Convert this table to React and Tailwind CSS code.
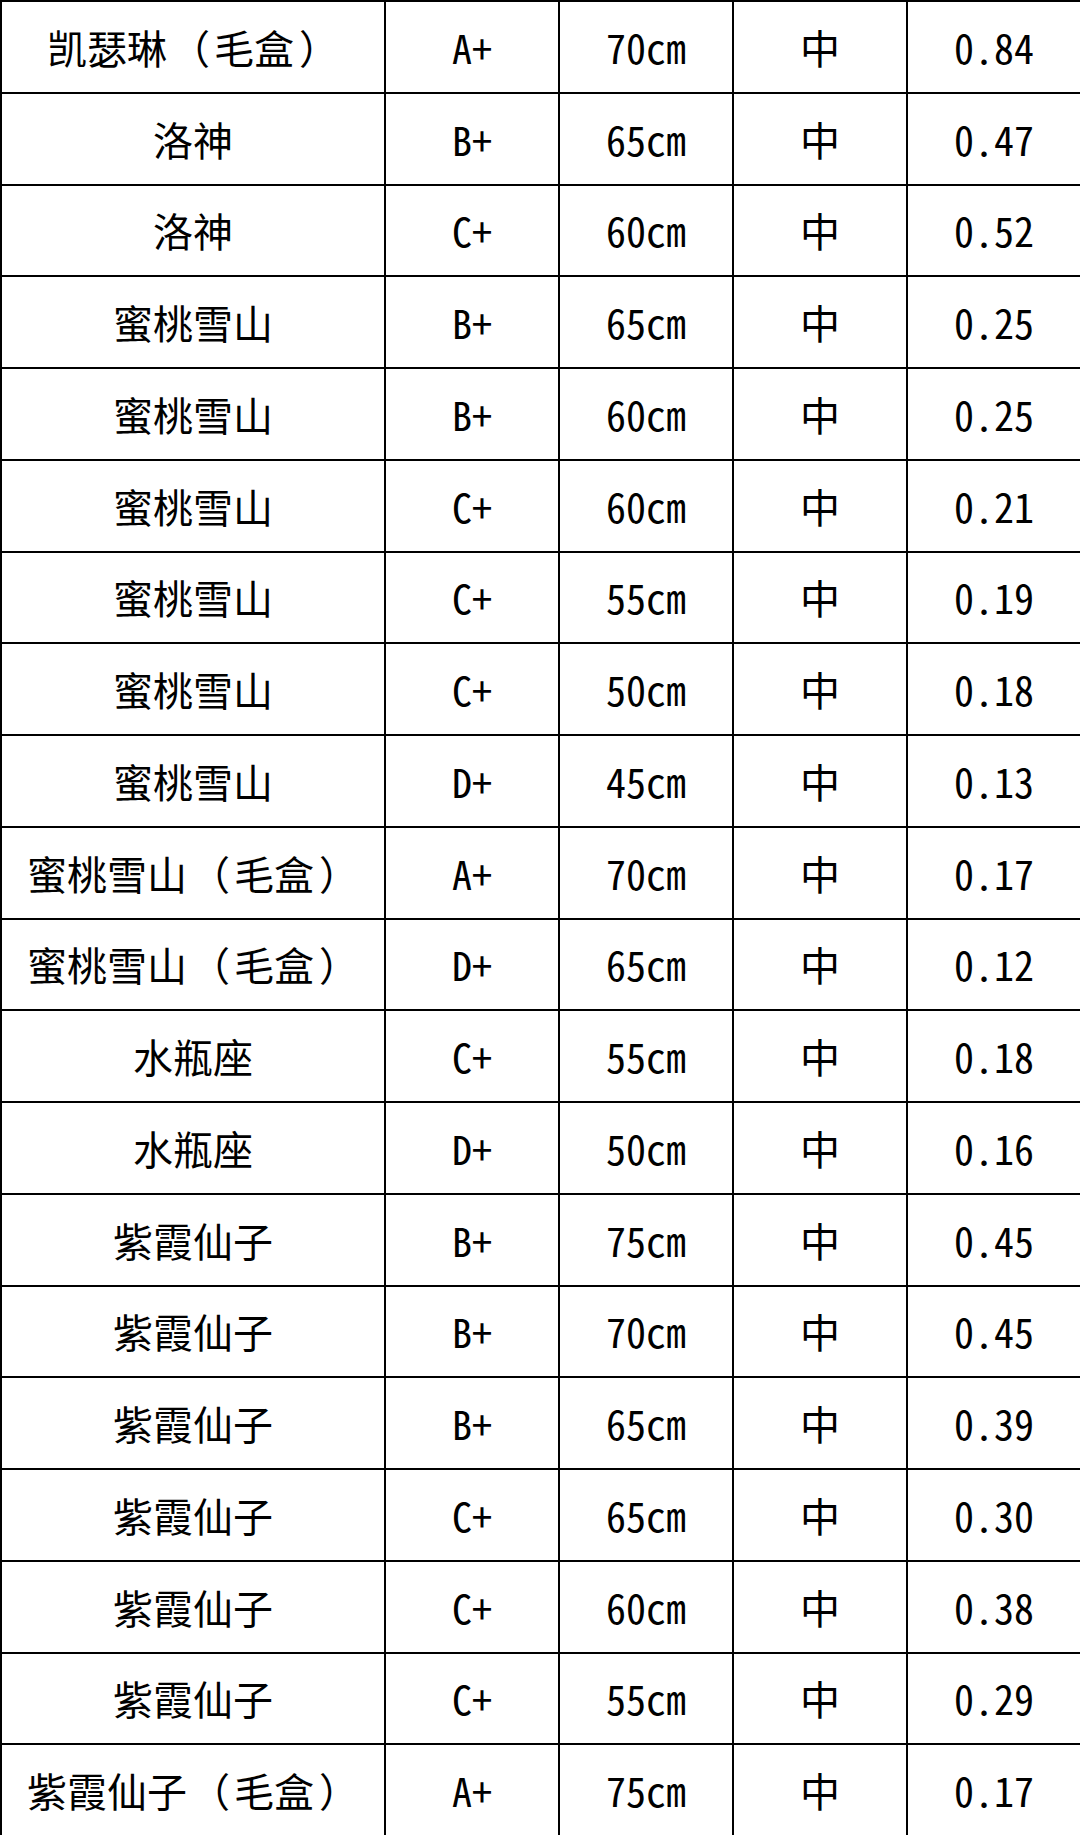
import React from "react";

const rows = [
  ["凯瑟琳（毛盒）", "A+", "70cm", "中", "0.84"],
  ["洛神", "B+", "65cm", "中", "0.47"],
  ["洛神", "C+", "60cm", "中", "0.52"],
  ["蜜桃雪山", "B+", "65cm", "中", "0.25"],
  ["蜜桃雪山", "B+", "60cm", "中", "0.25"],
  ["蜜桃雪山", "C+", "60cm", "中", "0.21"],
  ["蜜桃雪山", "C+", "55cm", "中", "0.19"],
  ["蜜桃雪山", "C+", "50cm", "中", "0.18"],
  ["蜜桃雪山", "D+", "45cm", "中", "0.13"],
  ["蜜桃雪山（毛盒）", "A+", "70cm", "中", "0.17"],
  ["蜜桃雪山（毛盒）", "D+", "65cm", "中", "0.12"],
  ["水瓶座", "C+", "55cm", "中", "0.18"],
  ["水瓶座", "D+", "50cm", "中", "0.16"],
  ["紫霞仙子", "B+", "75cm", "中", "0.45"],
  ["紫霞仙子", "B+", "70cm", "中", "0.45"],
  ["紫霞仙子", "B+", "65cm", "中", "0.39"],
  ["紫霞仙子", "C+", "65cm", "中", "0.30"],
  ["紫霞仙子", "C+", "60cm", "中", "0.38"],
  ["紫霞仙子", "C+", "55cm", "中", "0.29"],
  ["紫霞仙子（毛盒）", "A+", "75cm", "中", "0.17"],
];

// brackets sit a little wider in the original
const Name = ({ text }) => {
  const m = text.match(/^(.*)（(.*)）$/);
  if (!m) return text;
  return (
    <>
      {m[1]}
      <span className="pl-[3px] pr-[4px]">（</span>
      {m[2]}
      <span className="pl-[5px]">）</span>
    </>
  );
};

export default function App() {
  return (
    <div className="w-[1080px] h-[1835px] bg-white">
      <table className="w-[1080px] h-[1835px] table-fixed border-collapse text-black text-[40px] leading-none font-['Noto_Sans_Mono_CJK_SC','Noto_Sans_CJK_SC',sans-serif]">
        <colgroup>
          <col className="w-[384px]" />
          <col className="w-[174px]" />
          <col className="w-[174px]" />
          <col className="w-[174px]" />
          <col className="w-[174px]" />
        </colgroup>
        <tbody>
          {rows.map((r, i) => (
            <tr key={i} className="h-[91.75px]">
              {r.map((c, j) => (
                <td key={j} className="border-[2.5px] border-black text-center align-middle p-0 whitespace-nowrap">
                  {j === 0 ? <Name text={c} /> : c}
                </td>
              ))}
            </tr>
          ))}
        </tbody>
      </table>
    </div>
  );
}
